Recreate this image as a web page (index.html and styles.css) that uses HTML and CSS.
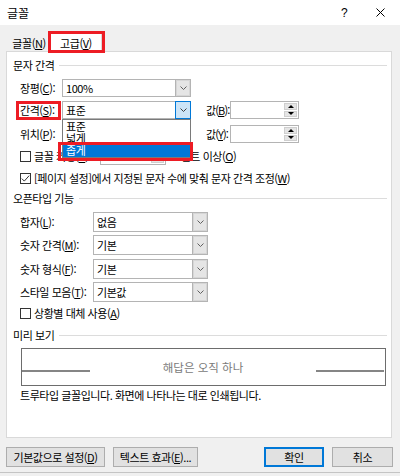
FILE: index.html
```html
<!DOCTYPE html>
<html lang="ko">
<head>
<meta charset="utf-8">
<title>글꼴</title>
<link rel="stylesheet" href="styles.css">
</head>
<body>
<div class="dialog">
  <div class="titlebar">
    <span class="title">글꼴</span>
    <span class="help">?</span>
    <svg class="close" width="9" height="9" viewBox="0 0 9 9"><path d="M0.5 0.5L8.5 8.5M8.5 0.5L0.5 8.5" stroke="#000" stroke-width="1" fill="none"/></svg>
  </div>

  <div class="tabs">
    <div class="tab">글꼴(<u>N</u>)</div>
    <div class="tab active">고급(<u>V</u>)</div>
  </div>

  <div class="panel">
    <div class="group g1"><span>문자 간격</span></div>

    <div class="row r1">
      <span class="lab lab-top">장평(<u>C</u>):</span>
      <div class="combo combo-top"><span class="txt">100%</span><span class="dd"><svg width="7" height="4" viewBox="0 0 7 4"><path d="M0.5 0.5L3.5 3.5L6.5 0.5" stroke="#606060" fill="none"/></svg></span></div>
    </div>

    <div class="row r2">
      <span class="lab lab-top">간격(<u>S</u>):</span>
      <div class="combo combo-top focus"><span class="txt">표준</span><span class="dd"><svg width="7" height="4" viewBox="0 0 7 4"><path d="M0.5 0.5L3.5 3.5L6.5 0.5" stroke="#404040" fill="none"/></svg></span></div>
      <span class="lab lab-val">값(<u>B</u>):</span>
      <div class="spin"><span class="arrows"><i class="up"></i><i class="down"></i></span></div>
    </div>

    <div class="row r3">
      <span class="lab lab-top">위치(<u>P</u>):</span>
      <div class="combo combo-top"><span class="txt"></span><span class="dd"><svg width="7" height="4" viewBox="0 0 7 4"><path d="M0.5 0.5L3.5 3.5L6.5 0.5" stroke="#606060" fill="none"/></svg></span></div>
      <span class="lab lab-val">값(<u>Y</u>):</span>
      <div class="spin"><span class="arrows"><i class="up"></i><i class="down"></i></span></div>
    </div>

    <div class="row check c1">
      <span class="cb"></span>
      <span class="kern-lab">글꼴 커닝(<u>K</u>):</span>
      <div class="spin spin-kern"><span class="arrows"><i class="up"></i><i class="down"></i></span></div>
      <span class="kern-after">포인트 이상(<u>O</u>)</span>
    </div>

    <div class="row check c2">
      <span class="cb checked"><svg width="9" height="9" viewBox="0 0 9 9"><path d="M0.8 4.6L3.3 7.1L8.2 1.6" stroke="#333" stroke-width="1" fill="none"/></svg></span>
      <span>[페이지 설정]에서 지정된 문자 수에 맞춰 문자 간격 조정(<u>W</u>)</span>
    </div>

    <div class="group g2"><span>오픈타입 기능</span></div>

    <div class="row orow o1">
      <span class="lab lab-ot">합자(<u>L</u>):</span>
      <div class="combo combo-ot"><span class="txt">없음</span><span class="dd"><svg width="7" height="4" viewBox="0 0 7 4"><path d="M0.5 0.5L3.5 3.5L6.5 0.5" stroke="#606060" fill="none"/></svg></span></div>
    </div>
    <div class="row orow o2">
      <span class="lab lab-ot">숫자 간격(<u>M</u>):</span>
      <div class="combo combo-ot"><span class="txt">기본</span><span class="dd"><svg width="7" height="4" viewBox="0 0 7 4"><path d="M0.5 0.5L3.5 3.5L6.5 0.5" stroke="#606060" fill="none"/></svg></span></div>
    </div>
    <div class="row orow o3">
      <span class="lab lab-ot">숫자 형식(<u>F</u>):</span>
      <div class="combo combo-ot"><span class="txt">기본</span><span class="dd"><svg width="7" height="4" viewBox="0 0 7 4"><path d="M0.5 0.5L3.5 3.5L6.5 0.5" stroke="#606060" fill="none"/></svg></span></div>
    </div>
    <div class="row orow o4">
      <span class="lab lab-ot">스타일 모음(<u>T</u>):</span>
      <div class="combo combo-ot"><span class="txt">기본값</span><span class="dd"><svg width="7" height="4" viewBox="0 0 7 4"><path d="M0.5 0.5L3.5 3.5L6.5 0.5" stroke="#606060" fill="none"/></svg></span></div>
    </div>

    <div class="row check c3">
      <span class="cb"></span>
      <span>상황별 대체 사용(<u>A</u>)</span>
    </div>

    <div class="group g3"><span>미리 보기</span></div>

    <div class="preview">
      <span class="pline pline-l"></span>
      <span class="ptext">해답은 오직 하나</span>
      <span class="pline pline-r"></span>
    </div>

    <div class="note">트루타입 글꼴입니다. 화면에 나타나는 대로 인쇄됩니다.</div>
  </div>

  <div class="buttons">
    <div class="button b-default">기본값으로 설정(<u>D</u>)</div>
    <div class="button b-effect">텍스트 효과(<u>E</u>)...</div>
    <div class="button b-ok">확인</div>
    <div class="button b-cancel">취소</div>
  </div>
</div>

<ul class="dropdown">
  <li>표준</li>
  <li>넓게</li>
  <li class="sel">좁게</li>
</ul>

<div class="mark m-tab"></div>
<div class="mark m-label"></div>
<div class="mark m-item"></div>
</body>
</html>
```

FILE: styles.css
```css
* { box-sizing: border-box; }
html, body { margin: 0; padding: 0; }
body {
  width: 400px;
  height: 476px;
  overflow: hidden;
  position: relative;
  background: #f0f0f0;
  font-family: "Noto Sans CJK KR", "Noto Sans", sans-serif;
  font-size: 11px;
  letter-spacing: -0.45px;
  line-height: 14px;
  color: #000;
  white-space: nowrap;
}
u { text-decoration: underline; text-underline-offset: 1px; text-decoration-thickness: 1px; }

.dialog { width: 400px; height: 473px; border-bottom: 1px solid #c4c4c4; }

/* title bar */
.titlebar {
  height: 25px;
  background: #fff;
  display: flex;
  align-items: center;
  padding-left: 7px;
  font-size: 12px;
  letter-spacing: 0;
}
.title { flex: 1; }
.help { font-family: "Liberation Sans", sans-serif; font-size: 12px; width: 6px; }
.close { margin-left: 29px; margin-right: 15px; display: block; }

/* tabs */
.tabs {
  height: 26px;
  display: flex;
  align-items: flex-end;
  padding-left: 8px;
}
.tab {
  height: 16px;
  width: 42px;
  display: flex;
  align-items: center;
  justify-content: center;
}
.tab.active {
  height: 20px;
  width: 52px;
  background: #fff;
  border: 1px solid #d9d9d9;
  border-bottom: none;
  margin-bottom: -1px;
  position: relative;
  z-index: 1;
}

/* panel */
.panel {
  margin-left: 6px;
  width: 386px;
  height: 387px;
  background: #fff;
  border: 1px solid #d9d9d9;
  padding-left: 6px;
}

.group {
  display: flex;
  align-items: center;
  height: 14px;
  margin-right: 4px;
}
.group::after {
  content: "";
  flex: 1;
  height: 1px;
  background: #dcdcdc;
  margin-left: 5px;
  margin-top: 1px;
}
.g1 { margin-top: 6px; }
.g2 { margin-top: 4px; }
.g3 { margin-top: 6px; }

.row {
  display: flex;
  align-items: center;
  height: 18px;
  margin-left: 7px;
}
.r1 { margin-top: 7px; }
.r2 { margin-top: 4px; }
.r3 { margin-top: 6px; }
.c1 { margin-top: 4px; }
.c2 { margin-top: 4px; }
.orow { height: 20px; }
.o1 { margin-top: 7px; }
.o2 { margin-top: 3px; }
.o3 { margin-top: 4px; }
.o4 { margin-top: 3px; }
.c3 { margin-top: 2px; }

.lab { flex: none; }
.lab-top { width: 42px; }
.lab-val { width: 24px; margin-left: 15px; letter-spacing: -0.9px; }
.lab-ot { width: 73px; }

/* combo boxes */
.combo {
  height: 100%;
  border: 1px solid #b4b4b4;
  background: #fff;
  display: flex;
  align-items: center;
  padding-left: 3px;
  flex: none;
}
.combo-top { width: 129px; }
.combo-ot { width: 115px; }
.combo .txt { flex: 1; }
.combo .dd {
  width: 15px;
  height: 100%;
  background: #e5e5e5;
  border-left: 1px solid #b4b4b4;
  box-shadow: inset 0 0 0 1px #d6d6d6;
  display: flex;
  align-items: center;
  justify-content: center;
}
.combo .dd svg { display: block; }
.combo.focus .dd {
  background: #cce4f7;
  border: 1px solid #0078d7;
  box-shadow: none;
  height: calc(100% + 2px);
  margin: -1px -1px -1px 0;
  width: 16px;
}

/* spin boxes */
.spin {
  width: 69px;
  height: 18px;
  border: 1px solid #b4b4b4;
  background: #fff;
  display: flex;
  justify-content: flex-end;
  padding: 1px;
  flex: none;
}
.spin .arrows {
  width: 13px;
  display: flex;
  flex-direction: column;
  gap: 1px;
}
.spin .arrows i {
  flex: 1;
  background: #e5e5e5;
  border: 1px solid #cfcfcf;
  display: flex;
  align-items: center;
  justify-content: center;
}
.spin .arrows i::before {
  content: "";
  width: 0;
  height: 0;
  border-left: 3px solid transparent;
  border-right: 3px solid transparent;
}
.spin .arrows i.up::before { border-bottom: 3px solid #000; }
.spin .arrows i.down::before { border-top: 3px solid #000; }
.spin-kern { width: 66px; }

/* checkboxes */
.cb {
  width: 11px;
  height: 11px;
  border: 1px solid #333;
  background: #fff;
  margin-right: 3px;
  flex: none;
  display: flex;
  align-items: center;
  justify-content: center;
}
.cb svg { display: block; }
.kern-lab { width: 66px; flex: none; overflow: hidden; }
.kern-after { margin-left: 5px; }

/* preview */
.preview {
  margin: 6px 0 0 8px;
  width: 365px;
  height: 38px;
  border: 1px solid #6d6d6d;
  display: grid;
  grid-template-columns: 68px 1fr 69px;
}
.pline {
  height: 2px;
  background: #858585;
  margin-top: 21px;
}
.pline-r { margin-right: 1px; }
.ptext {
  align-self: center;
  text-align: center;
  color: #7a7a7a;
  font-size: 11.5px;
  letter-spacing: 0;
}
.note {
  margin: 2px 0 0 7px;
  height: 14px;
}

/* buttons */
.buttons {
  display: flex;
  margin-top: 9px;
  padding-left: 6px;
  height: 20px;
}
.button {
  height: 20px;
  background: #e1e1e1;
  border: 1px solid #adadad;
  display: flex;
  align-items: center;
  justify-content: center;
  flex: none;
}
.b-default { width: 99px; }
.b-effect { width: 85px; margin-left: 8px; }
.b-ok {
  width: 60px;
  margin-left: auto;
  border-color: #0078d7;
  box-shadow: inset 0 0 0 1px #0078d7;
}
.b-cancel { width: 61px; margin-left: 8px; margin-right: 7px; }

/* open dropdown list (overlay) */
.dropdown {
  position: absolute;
  left: 62px;
  top: 119px;
  width: 129px;
  height: 39px;
  margin: 0;
  padding: 0;
  list-style: none;
  background: #fff;
  border: 1px solid #7a7a7a;
  z-index: 5;
}
.dropdown li {
  height: 12px;
  line-height: 12px;
  padding-left: 3px;
}
.dropdown li.sel {
  height: 13px;
  line-height: 13px;
  background: #0078d7;
  color: #fff;
}

/* red annotation boxes */
.mark {
  position: absolute;
  border: 3px solid #ed1c24;
  z-index: 6;
}
.m-tab { left: 48px; top: 31px; width: 57px; height: 22px; }
.m-label { left: 16px; top: 101px; width: 45px; height: 19px; }
.m-item { left: 58px; top: 142px; width: 135px; height: 19px; }
```
